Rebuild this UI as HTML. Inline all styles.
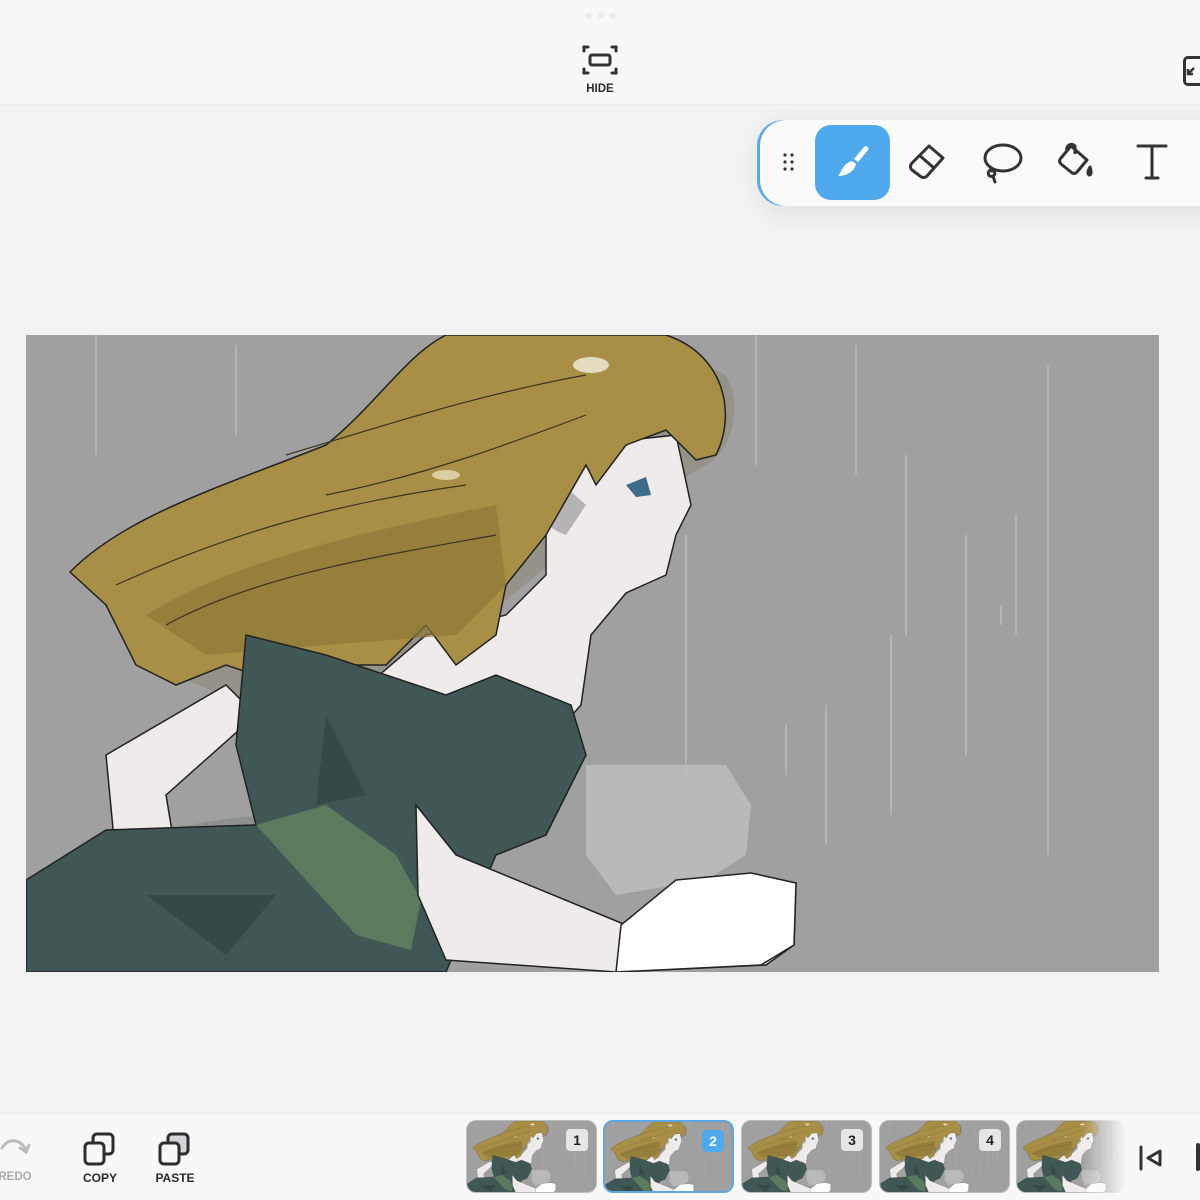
<!DOCTYPE html>
<html><head><meta charset="utf-8"><style>
*{margin:0;padding:0;box-sizing:border-box}
body{width:1200px;height:1200px;background:#f2f2f3;position:relative;overflow:hidden;font-family:"Liberation Sans",sans-serif}
.top{position:absolute;left:0;top:0;width:1200px;height:105px;background:#f8f8f8;border-bottom:1px solid #ececec}
.bot{position:absolute;left:0;top:1113px;width:1200px;height:87px;background:#f8f8f8;border-top:1px solid #ececec}
.lbl{position:absolute;font-size:12px;font-weight:bold;color:#2a2a2a;text-align:center}
.tool{position:absolute;left:760px;top:120px;width:460px;height:86px;background:#fafafa;border-radius:26px 0 0 26px;box-shadow:-3px 0 0 #5aa8e6,0 6px 24px rgba(0,0,0,.08)}
.thumb{position:absolute;top:1120px;width:131px;height:73px;border-radius:10px;overflow:hidden;background:#a0a0a0;border:1.5px solid #bdbdbd}
.num{position:absolute;right:8px;top:8px;width:22px;height:22px;border-radius:4px;background:#e6e6e6;color:#222;font-weight:bold;font-size:14px;text-align:center;line-height:22px}
</style></head><body>
<svg width="0" height="0" style="position:absolute"><defs>
<g id="art">
<rect width="1133" height="637" fill="#a0a0a0"/>
<g stroke="#c4c4c4" stroke-width="1.5" opacity=".8">
<line x1="70" y1="0" x2="70" y2="120"/><line x1="210" y1="10" x2="210" y2="100"/><line x1="730" y1="0" x2="730" y2="130"/><line x1="830" y1="10" x2="830" y2="140"/><line x1="880" y1="120" x2="880" y2="300"/><line x1="940" y1="200" x2="940" y2="420"/><line x1="1022" y1="30" x2="1022" y2="520"/><line x1="660" y1="200" x2="660" y2="440"/><line x1="990" y1="180" x2="990" y2="300"/><line x1="975" y1="270" x2="975" y2="290"/><line x1="760" y1="390" x2="760" y2="440"/><line x1="800" y1="370" x2="800" y2="510"/><line x1="865" y1="300" x2="865" y2="480"/>
</g>
<path d="M120,330 C140,240 250,140 420,60 C520,20 640,10 700,40 C720,80 700,120 680,130 L560,200 L400,330 L250,380 Z" fill="#8f8c7f" opacity=".7"/>
<path d="M0,560 C60,520 150,480 260,480 L300,560 L200,637 L0,637 Z" fill="#7f8584" opacity=".6"/>
<path d="M560,110 L650,100 L665,170 L650,200 L640,240 L600,258 L565,300 L555,370 L510,420 L360,420 L330,360 L400,300 L480,280 L520,240 L520,150 Z" fill="#efebea" stroke="#222" stroke-width="1.5"/>
<path d="M515,130 C500,160 510,190 540,200 L560,170 Z" fill="#b5b3b3"/>
<path d="M44,237 C100,180 200,150 300,110 C350,70 380,20 420,0 L640,0 C700,20 710,80 690,120 L670,125 L640,95 L600,110 L570,150 L560,130 L520,200 L480,250 L470,300 L430,330 L400,290 L360,330 L300,330 L260,350 L200,330 L150,350 L110,330 L80,270 Z" fill="#a88f45" stroke="#222" stroke-width="1.5"/>
<path d="M120,280 C200,230 320,200 470,170 L480,250 L430,300 L300,310 L180,320 Z" fill="#8d7838" opacity=".7"/>
<path d="M140,290 C230,240 360,220 470,200 M90,250 C200,200 300,170 440,150 M260,120 C360,90 450,60 560,40 M300,160 C400,140 480,110 560,80" stroke="#3a3320" stroke-width="1.2" fill="none"/>
<ellipse cx="565" cy="30" rx="18" ry="8" fill="#f3efe0" opacity=".8"/>
<ellipse cx="420" cy="140" rx="14" ry="5" fill="#efe8cc" opacity=".7"/>
<path d="M600,150 L620,142 L625,160 L610,162 Z" fill="#3d6b8a"/>
<path d="M80,420 L200,350 L230,380 L140,460 L150,520 L90,525 Z" fill="#efebea" stroke="#222" stroke-width="1.5"/>
<path d="M560,430 L700,430 L725,470 L720,520 L680,545 L590,560 L560,520 Z" fill="#bebdbd" opacity=".85"/>
<path d="M220,300 L300,320 L420,360 L470,340 L545,370 L560,420 L520,500 L470,520 L420,637 L0,637 L0,545 L80,495 L230,490 L210,410 Z" fill="#3f5755" stroke="#222" stroke-width="1.5"/>
<path d="M230,490 L300,470 L370,520 L395,565 L385,615 L330,600 Z" fill="#5b7b5e"/>
<path d="M300,380 L340,460 L290,470 Z M120,560 L250,560 L200,620 Z" fill="#2f4544" opacity=".7"/>
<path d="M390,470 L430,520 L600,590 L660,560 L720,540 L770,548 L768,610 L740,630 L590,637 L420,625 L392,560 Z" fill="#efebea" stroke="#222" stroke-width="1.5"/>
<path d="M650,545 L725,538 L770,548 L768,610 L735,630 L590,637 L595,590 Z" fill="#fff" stroke="#222" stroke-width="1.5"/>
</g></defs></svg>
<div class="top"></div>
<div style="position:absolute;left:585px;top:12px;display:flex;gap:5px"><i style="width:7px;height:7px;border-radius:50%;background:#ececec"></i><i style="width:7px;height:7px;border-radius:50%;background:#ececec"></i><i style="width:7px;height:7px;border-radius:50%;background:#ececec"></i></div>
<svg style="position:absolute;left:582px;top:44px" width="36" height="32" viewBox="0 0 36 32" fill="none" stroke="#333" stroke-width="3" stroke-linecap="round">
<path d="M2,7V3H6M30,3H34V7M2,25V29H6M30,29H34V25"/><rect x="8" y="11" width="20" height="10" rx="2"/></svg>
<div class="lbl" style="left:570px;top:83px;width:60px;font-size:11.5px">HIDE</div>
<div style="position:absolute;left:1183px;top:56px;width:30px;height:30px;border:3px solid #333;border-radius:5px"></div>
<svg style="position:absolute;left:1186px;top:66px" width="10" height="16" viewBox="0 0 10 16" fill="none" stroke="#333" stroke-width="2.5"><path d="M8,2L2,8M2,3V8H7"/></svg>
<div class="tool"></div>
<svg style="position:absolute;left:782px;top:152px" width="14" height="22"><g fill="#333"><circle cx="3" cy="3" r="1.6"/><circle cx="10" cy="3" r="1.6"/><circle cx="3" cy="10" r="1.6"/><circle cx="10" cy="10" r="1.6"/><circle cx="3" cy="17" r="1.6"/><circle cx="10" cy="17" r="1.6"/></g></svg>
<div style="position:absolute;left:815px;top:125px;width:75px;height:75px;border-radius:16px;background:#4ea9ed"></div>
<svg style="position:absolute;left:832px;top:142px" width="42" height="42" viewBox="0 0 42 42"><path d="M34,4 C36,4 37,6 36,8 L26,20 L22,17 L32,5Z" fill="#fff"/><path d="M20,19 L24,22 C22,30 14,34 6,34 C10,30 10,22 20,19Z" fill="#fff"/></svg>
<svg style="position:absolute;left:905px;top:140px" width="44" height="44" viewBox="0 0 44 44" fill="none" stroke="#333" stroke-width="3" stroke-linejoin="round"><path d="M24,6 L38,18 L22,36 C20,38 17,38 15,36 L7,30 C5,28 5,25 7,23 Z"/><path d="M14,15 L29,28"/></svg>
<svg style="position:absolute;left:980px;top:140px" width="44" height="44" viewBox="0 0 44 44" fill="none" stroke="#333" stroke-width="3" stroke-linecap="round"><ellipse cx="23" cy="18" rx="18" ry="13"/><path d="M12,29 C6,31 8,38 13,36 C17,34 14,30 11,31 M13,36 L15,42"/></svg>
<svg style="position:absolute;left:1055px;top:140px" width="44" height="44" viewBox="0 0 44 44" fill="none" stroke="#333" stroke-width="3" stroke-linejoin="round"><path d="M16,6 L32,20 L22,32 C20,34 18,34 16,32 L6,24 C4,22 4,20 6,18 Z"/><path d="M12,12 C10,6 16,2 20,6 L20,14"/><path d="M35,27 C33,31 32,33 34,35 C36,35 37,33 35,27Z" fill="#333"/></svg>
<svg style="position:absolute;left:1135px;top:142px" width="34" height="40" viewBox="0 0 34 40" fill="none" stroke="#333" stroke-width="3" stroke-linecap="round"><path d="M3,4H31M17,4V36M11,36H23"/></svg>
<svg style="position:absolute;left:26px;top:335px" width="1133" height="637"><use href="#art"/></svg>
<div class="bot"></div>
<svg style="position:absolute;left:0;top:1136px" width="32" height="24" viewBox="0 0 32 24" fill="none" stroke="#bbb" stroke-width="3" stroke-linecap="round"><path d="M2,12 C8,2 20,2 26,14 M20,12 L26,16 L29,9"/></svg>
<div class="lbl" style="left:-10px;top:1171px;width:50px;color:#aaa;font-size:11.5px">REDO</div>
<svg style="position:absolute;left:83px;top:1132px" width="34" height="34" viewBox="0 0 34 34" fill="none" stroke="#2d2d2d" stroke-width="3"><rect x="10" y="2" width="20" height="20" rx="4"/><rect x="2" y="11" width="19" height="21" rx="4" fill="#f8f8f8"/></svg>
<div class="lbl" style="left:70px;top:1171px;width:60px">COPY</div>
<svg style="position:absolute;left:158px;top:1132px" width="34" height="34" viewBox="0 0 34 34" fill="none" stroke="#2d2d2d" stroke-width="3"><rect x="10" y="2" width="20" height="20" rx="4" fill="#d4d4d8"/><rect x="2" y="11" width="19" height="21" rx="4" fill="#f8f8f8"/></svg>
<div class="lbl" style="left:145px;top:1171px;width:60px">PASTE</div>
<div class="thumb" style="left:466px"><svg width="131" height="73" viewBox="0 0 1133 637"><use href="#art"/></svg><div class="num">1</div></div>
<div class="thumb" style="left:603px;border:2px solid #5aa8e6"><svg width="131" height="73" viewBox="0 0 1133 637"><use href="#art"/></svg><div class="num" style="background:#4ea9ed;color:#fff">2</div></div>
<div class="thumb" style="left:741px"><svg width="131" height="73" viewBox="0 0 1133 637"><use href="#art"/></svg><div class="num">3</div></div>
<div class="thumb" style="left:879px"><svg width="131" height="73" viewBox="0 0 1133 637"><use href="#art"/></svg><div class="num">4</div></div>
<div class="thumb" style="left:1016px;width:110px;-webkit-mask-image:linear-gradient(90deg,#000 60%,transparent)"><svg width="131" height="73" viewBox="0 0 1133 637"><use href="#art"/></svg></div>
<svg style="position:absolute;left:1138px;top:1144px" width="26" height="28" viewBox="0 0 26 28" fill="none" stroke="#333" stroke-width="3" stroke-linejoin="round" stroke-linecap="round"><path d="M3,3V25M22,7L10,14L22,21Z"/></svg>
<div style="position:absolute;left:1196px;top:1143px;width:4px;height:28px;background:#333;border-radius:2px"></div>
</body></html>
